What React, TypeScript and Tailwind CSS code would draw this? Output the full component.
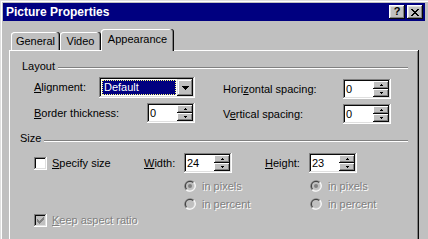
import React from "react";

function SpinBtn({ up }: { up?: boolean }) {
  return (
    <div className="flex h-[8px] items-center justify-center bg-[#c0c0c0] shadow-[inset_-1px_-1px_#0a0a0a,inset_1px_1px_#fff,inset_-2px_-2px_#808080]">
      <svg width="3" height="2" viewBox="0 0 3 2" shapeRendering="crispEdges">
        {up ? (
          <path d="M1 0h1v1h1v1H0V1h1z" fill="#000" />
        ) : (
          <path d="M0 0h3v1H2v1H1V1H0z" fill="#000" />
        )}
      </svg>
    </div>
  );
}

function Spinner({ value }: { value: string }) {
  return (
    <div className="flex h-[20px] w-[48px] bg-white p-[2px] shadow-[inset_-1px_-1px_#fff,inset_1px_1px_#808080,inset_-2px_-2px_#dfdfdf,inset_2px_2px_#0a0a0a]">
      <div className="flex-1 pl-[1px] text-[11px] leading-[16px] text-black">{value}</div>
      <div className="flex w-[16px] flex-col">
        <SpinBtn up />
        <SpinBtn />
      </div>
    </div>
  );
}

function Dropdown() {
  return (
    <div className="flex h-[21px] w-[96px] bg-white p-[2px] shadow-[inset_-1px_-1px_#fff,inset_1px_1px_#808080,inset_-2px_-2px_#dfdfdf,inset_2px_2px_#0a0a0a]">
      <div className="flex flex-1 p-[1px]">
        <div className="flex flex-1 items-center border border-dotted border-[#ffff80] bg-[#000080] pl-[1px] text-[11px] leading-[13px] text-white">
          Default
        </div>
      </div>
      <div className="flex w-[16px] items-center justify-center bg-[#c0c0c0] shadow-[inset_-1px_-1px_#0a0a0a,inset_1px_1px_#dfdfdf,inset_-2px_-2px_#808080,inset_2px_2px_#fff]">
        <svg width="7" height="4" viewBox="0 0 7 4" shapeRendering="crispEdges">
          <path d="M0 0h7v1h-1v1h-1v1h-1v1h-1v-1h-1v-1h-1v-1h-1z" fill="#000" />
        </svg>
      </div>
    </div>
  );
}

function CheckBox({ checked, disabled }: { checked?: boolean; disabled?: boolean }) {
  return (
    <div
      className={
        disabled
          ? "flex h-[13px] w-[13px] items-center justify-center bg-[#c0c0c0] shadow-[inset_-1px_-1px_#fff,inset_1px_1px_#808080,inset_-2px_-2px_#dfdfdf,inset_2px_2px_#0a0a0a]"
          : "flex h-[13px] w-[13px] items-center justify-center bg-white shadow-[inset_-1px_-1px_#fff,inset_1px_1px_#808080,inset_-2px_-2px_#dfdfdf,inset_2px_2px_#0a0a0a]"
      }
    >
      {checked && (
        <svg width="7" height="7" viewBox="0 0 7 7" shapeRendering="crispEdges">
          <path
            d="M0 2h1v3H0z M1 3h1v3H1z M2 4h1v3H2z M3 3h1v3H3z M4 2h1v3H4z M5 1h1v3H5z M6 0h1v3H6z"
            fill={disabled ? "#808080" : "#000"}
          />
        </svg>
      )}
    </div>
  );
}

function Radio({ checked }: { checked?: boolean }) {
  return (
    <svg width="12" height="12" viewBox="0 0 12 12" className="shrink-0">
      <path d="M1.76 10.24A6 6 0 0 1 10.24 1.76Z" fill="#808080" />
      <path d="M10.24 1.76A6 6 0 0 1 1.76 10.24Z" fill="#fff" />
      <path d="M2.46 9.54A5 5 0 0 1 9.54 2.46Z" fill="#404040" />
      <path d="M9.54 2.46A5 5 0 0 1 2.46 9.54Z" fill="#dfdfdf" />
      <circle cx="6" cy="6" r="4" fill="#c0c0c0" />
      {checked && <circle cx="6" cy="6" r="2" fill="#808080" />}
    </svg>
  );
}

function GroupHeader({ label, pl }: { label: string; pl: "a" | "b" }) {
  return (
    <div className={pl === "a" ? "flex items-start pl-[13px] pr-[11px]" : "flex items-start pl-[11px] pr-[11px]"}>
      <span className="leading-[13px]">{label}</span>
      <div className={pl === "a" ? "ml-[3px] mt-[7px] h-[2px] flex-1 border-t border-b border-t-[#808080] border-b-white" : "ml-[3px] mt-[8px] h-[2px] flex-1 border-t border-b border-t-[#808080] border-b-white"} />
    </div>
  );
}

const dis = "text-[#808080] [text-shadow:1px_1px_0_#fff]";

export default function App() {
  return (
    <div className="h-[239px] w-[428px] overflow-hidden bg-[#c0c0c0] pl-[3px] pr-[3px] pt-[3px] font-['Liberation_Sans',Arial,sans-serif] text-[11px] leading-[13px] text-black shadow-[inset_1px_1px_#dfdfdf,inset_2px_2px_#fff]">
      {/* Title bar */}
      <div className="flex h-[18px] items-center bg-[#000080] pl-[3px] pr-[2px]">
        <span className="flex-1 text-[12px] font-bold leading-[13px] text-white">Picture Properties</span>
        <div className="flex h-[14px] w-[16px] items-center justify-center bg-[#c0c0c0] pb-[1px] shadow-[inset_-1px_-1px_#0a0a0a,inset_1px_1px_#fff,inset_-2px_-2px_#808080,inset_2px_2px_#dfdfdf]">
          <span className="text-[11px] font-bold leading-[11px]">?</span>
        </div>
        <div className="ml-[2px] flex h-[14px] w-[16px] items-center justify-center bg-[#c0c0c0] shadow-[inset_-1px_-1px_#0a0a0a,inset_1px_1px_#fff,inset_-2px_-2px_#808080,inset_2px_2px_#dfdfdf]">
          <svg width="8" height="7" viewBox="0 0 8 7" shapeRendering="crispEdges">
            <path
              d="M0 0h2v1H0z M6 0h2v1H6z M1 1h2v1H1z M5 1h2v1H5z M2 2h4v1H2z M3 3h2v1H3z M2 4h4v1H2z M1 5h2v1H1z M5 5h2v1H5z M0 6h2v1H0z M6 6h2v1H6z"
              fill="#000"
            />
          </svg>
        </div>
      </div>

      {/* Tabs */}
      <div className="mt-[8px] flex items-end pl-[8px]">
        <div className="flex h-[18px] w-[49px] items-center justify-center rounded-t-[3px] shadow-[inset_-1px_0_#0a0a0a,inset_-2px_0_#808080,inset_1px_1px_#fff]">
          General
        </div>
        <div className="flex h-[18px] w-[41px] items-center justify-center rounded-t-[3px] shadow-[inset_-1px_0_#0a0a0a,inset_-2px_0_#808080,inset_1px_1px_#fff]">
          Video
        </div>
        <div className="relative z-10 -mb-[1px] flex h-[22px] w-[73px] items-center justify-center rounded-t-[3px] bg-[#c0c0c0] pb-[2px] shadow-[inset_-1px_0_#0a0a0a,inset_-2px_0_#808080,inset_1px_1px_#fff]">
          Appearance
        </div>
      </div>

      {/* Panel */}
      <div className="ml-[6px] h-[200px] w-[410px] pt-[10px] shadow-[inset_-1px_-1px_#0a0a0a,inset_1px_1px_#fff,inset_-2px_-2px_#808080]">
        <GroupHeader label="Layout" pl="a" />

        <div className="mt-[4px] flex items-start pl-[25px]">
          <div className="flex h-[21px] items-center">
            <span className="w-[65px]">
              <u>A</u>lignment:
            </span>
            <Dropdown />
          </div>
          <div className="ml-[28px] mt-[2px] flex h-[20px] items-center">
            <span className="w-[120px]">
              Hori<u>z</u>ontal spacing:
            </span>
            <Spinner value="0" />
          </div>
        </div>

        <div className="mt-[4px] flex items-start pl-[25px]">
          <div className="flex h-[20px] items-center">
            <span className="w-[113px]">
              <u>B</u>order thickness:
            </span>
            <Spinner value="0" />
          </div>
          <div className="ml-[28px] mt-[1px] flex h-[20px] items-center">
            <span className="w-[120px]">
              V<u>e</u>rtical spacing:
            </span>
            <Spinner value="0" />
          </div>
        </div>

        <div className="mt-[8px]">
          <GroupHeader label="Size" pl="b" />
        </div>

        <div className="mt-[8px] flex h-[20px] items-center pl-[25px]">
          <div className="flex w-[110px] items-center">
            <CheckBox />
            <span className="ml-[5px]">
              <u>S</u>pecify size
            </span>
          </div>
          <span className="w-[40px]">
            <u>W</u>idth:
          </span>
          <Spinner value="24" />
          <span className="ml-[33px] w-[44px]">
            <u>H</u>eight:
          </span>
          <Spinner value="23" />
        </div>

        <div className="mt-[7px] flex h-[12px] items-center pl-[175px]">
          <div className="flex w-[126px] items-center">
            <Radio checked />
            <span className={"ml-[6px] " + dis}>in pixels</span>
          </div>
          <div className="flex items-center">
            <Radio checked />
            <span className={"ml-[6px] " + dis}>in pixels</span>
          </div>
        </div>

        <div className="mt-[6px] flex h-[12px] items-center pl-[175px]">
          <div className="flex w-[126px] items-center">
            <Radio />
            <span className={"ml-[6px] " + dis}>in percent</span>
          </div>
          <div className="flex items-center">
            <Radio />
            <span className={"ml-[6px] " + dis}>in percent</span>
          </div>
        </div>

        <div className="mt-[4px] flex h-[13px] items-center pl-[25px]">
          <CheckBox checked disabled />
          <span className={"ml-[5px] " + dis}>
            <u>K</u>eep aspect ratio
          </span>
        </div>
      </div>
    </div>
  );
}
